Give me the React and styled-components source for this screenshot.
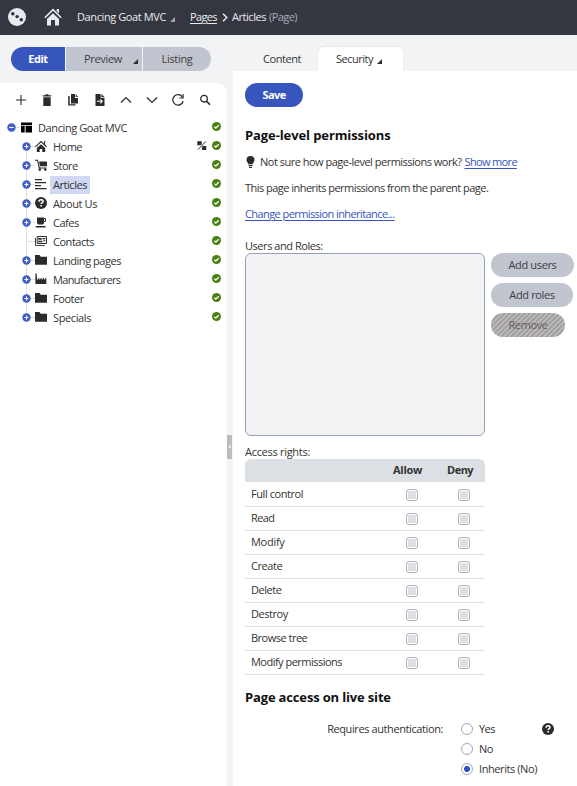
import React from 'react';
import styled, { createGlobalStyle, css } from 'styled-components';

const Global = createGlobalStyle`
  * { box-sizing: border-box; }
  body {
    margin: 0;
    background: #f2f3f5;
    font: 11px/16px "Open Sans", "Noto Sans", sans-serif;
    color: #343332;
    overflow: hidden;
  }
  svg { display: block; flex: none; }
`;

const T = styled.span`
  white-space: nowrap;
  letter-spacing: ${(p) => p.$ls ?? -0.45}px;
`;
const Page = styled.div`
  width: 577px;
  height: 786px;
  display: flex;
  flex-direction: column;
`;
const Header = styled.header`
  flex: none;
  height: 35px;
  background: #343740;
  color: #e9eaee;
  display: flex;
  align-items: center;
  padding: 0 0 1px 8px;
`;
const House = styled.svg`margin: 0 15px 0 18px;`;
const Caret = styled.svg`
  margin: ${(p) => p.$m || '0'};
  fill: ${(p) => p.$c || '#2f2f2f'};
`;
const Crumb = styled.a`
  text-decoration: underline;
  text-underline-offset: 2px;
`;
const Chevron = styled.svg`margin: 0 4px 0 5px;`;
const Kind = styled.span`
  margin-left: 3px;
  color: #a9adbb;
`;
const Main = styled.div`
  flex: 1;
  min-height: 0;
  display: flex;
`;
const Side = styled.aside`
  width: 227px;
  padding-top: 12px;
  display: flex;
  flex-direction: column;
`;
const Modes = styled.div`
  display: flex;
  gap: 1px;
  margin: 0 0 12px 11px;
  width: 200px;
  height: 24px;
  border-radius: 12px;
  overflow: hidden;
  flex: none;
`;
const Mode = styled.div`
  width: ${(p) => p.$w}px;
  display: flex;
  align-items: center;
  justify-content: ${(p) => (p.$start ? 'flex-start' : 'center')};
  padding-left: ${(p) => (p.$start ? 18 : 0)}px;
  background: #c1c5cf;
  color: #403e3d;
  ${(p) => p.$active && css`background: #3655bd; color: #fff; font-weight: 700;`}
`;
const TreePanel = styled.div`
  flex: 1;
  background: #fff;
  border-top-right-radius: 9px;
  padding-top: 9px;
`;
const Tools = styled.div`
  display: grid;
  grid-template-columns: repeat(8, 26.3px);
  place-items: center;
  margin-left: 7.5px;
  height: 16px;
`;
const Tree = styled.div`margin-top: 10px;`;
const Node = styled.div`
  height: 19px;
  display: flex;
  align-items: center;
  padding-left: ${(p) => (p.$root ? 7 : 22)}px;
`;
const Rail = styled.svg`
  margin-right: ${(p) => (p.$root ? 0 : -1)}px;
`;
const Glyph = styled.svg`margin-top: -2px;`;
const Label = styled.div`
  height: 18px;
  line-height: 17px;
  margin-left: 3px;
  padding: 0 3px;
  background: ${(p) => (p.$selected ? '#d0d8f4' : 'transparent')};
`;
const Status = styled.div`
  margin: -3px 6px 0 auto;
  display: flex;
  gap: 5px;
`;
const Splitter = styled.div`
  width: 6px;
  display: flex;
  align-items: flex-start;
  padding-top: 400px;
`;
const Grip = styled.div`
  width: 5px;
  height: 24px;
  background: #bdbbbb;
  display: grid;
  place-items: center;
`;
const Content = styled.section`
  flex: 1;
  padding-top: 12px;
  display: flex;
  flex-direction: column;
`;
const Tabs = styled.div`
  display: flex;
  height: 24px;
  flex: none;
`;
const Tab = styled.div`
  display: flex;
  align-items: center;
  width: 85px;
  padding-left: ${(p) => (p.$active ? 18 : 30)}px;
  background: ${(p) => (p.$active ? '#fff' : 'transparent')};
  border-radius: 6px 6px 0 0;
  box-shadow: ${(p) => (p.$active ? '0 -1px 2px rgba(0,0,0,.05)' : 'none')};
`;
const Body = styled.div`
  flex: 1;
  background: #fff;
  padding: 12px 0 0 12px;
`;
const Button = styled.button`
  display: block;
  width: ${(p) => p.$w}px;
  height: 24px;
  padding: 0;
  border: 0;
  border-radius: 12px;
  font: inherit;
  color: #403e3d;
  background: #c1c5cf;
  ${(p) => p.$primary && css`background: #3655bd; color: #fff; font-weight: 700;`}
  ${(p) => p.$off && css`
    color: #64605f;
    background: repeating-linear-gradient(135deg, #bdbbbb 0 1.8px, #a3a1a1 1.8px 3.54px);
  `}
`;
const Heading = styled.h4`
  margin: ${(p) => p.$m};
  font: 700 13px/20px "Open Sans", sans-serif;
  letter-spacing: ${(p) => p.$ls}px;
  color: #111;
`;
const Line = styled.div`
  display: flex;
  align-items: center;
  height: 16px;
  margin-bottom: ${(p) => p.$mb ?? 10}px;
`;
const Link = styled.a`
  color: #3655bd;
  text-decoration: underline;
  text-underline-offset: 2px;
`;
const Gap = styled.span`width: ${(p) => p.$w}px;`;
const Lists = styled.div`
  display: flex;
  gap: 6px;
  margin-bottom: 8px;
`;
const Box = styled.div`
  width: 240px;
  height: 183px;
  border: 1px solid #979fb4;
  border-radius: 6px;
  background: #f2f3f5;
`;
const Stack = styled.div`
  display: flex;
  flex-direction: column;
  gap: 6px;
`;
const Row = styled.div`
  display: grid;
  grid-template-columns: 142px 54px 38px;
  width: 240px;
  height: 24px;
  padding: 0 0 1px 6px;
  align-items: center;
  border-bottom: 1px solid #dfe0e3;
`;
const HeadRow = styled(Row)`
  height: 23px;
  margin-bottom: 1px;
  border: 0;
  border-radius: 6px 6px 0 0;
  background: #dcdfe4;
  font-weight: 700;
`;
const Check = styled.span`
  width: 12px;
  height: 12px;
  margin: 1px 0 0 ${(p) => (p.$last ? 11 : 13)}px;
  border: 1px solid #b5b3b3;
  border-radius: 3px;
  background: #dcdfe6;
  box-shadow: inset 0 0 0 1px #fff;
`;
const Auth = styled.div`
  display: grid;
  grid-template-columns: 198px 99px 12px;
  align-items: start;
`;
const AuthLabel = styled.div`
  height: 20px;
  line-height: 20px;
  text-align: right;
`;
const Options = styled.div`padding-left: 18px;`;
const Option = styled.div`
  height: 20px;
  display: flex;
  align-items: center;
  gap: 6px;
  white-space: nowrap;
`;
const Radio = styled.span`
  flex: none;
  width: 12px;
  height: 12px;
  border: 1px solid #a3a9bb;
  border-radius: 50%;
  background: ${(p) => (p.$on ? 'radial-gradient(circle, #2f51c4 0 2.7px, #fff 3.3px)' : '#fff')};
`;
const HelpSpot = styled.div`
  height: 20px;
  display: flex;
  align-items: center;
`;

const Triangle = (p) => (
  <Caret width="5" height="5" $m={p.m} $c={p.c}><path d="M5 0v5H0z" /></Caret>
);
const Help = ({ size = 12 }) => (
  <svg width={size} height={size} viewBox="0 0 12 12">
    <circle cx="6" cy="6" r="6" fill="#2c2b2a" />
    <path d="M4.1 4.7C4.1 3.4 5 2.7 6.1 2.7S8 3.4 8 4.4C8 5.7 6.2 5.7 6.2 7" fill="none" stroke="#fff" strokeWidth="1.5" />
    <path d="M5.4 8h1.6v1.5H5.4z" fill="#fff" />
  </svg>
);

const glyphs = {
  template: <><path d="M0 1h12v3H0zM0 5h4v7H0zM5 5h7v7H5z" /></>,
  home: <><path d="M6 4.2 10.2 8v4H7.3V9H4.7v3H1.8V8z" /><path d="M.4 6.8 6 1.6 11.600 6.800M9.600 1v3.500" fill="none" stroke="currentColor" strokeWidth="1.100" /></>,
  cart: <><path d="M4 2.500H12V7.300H5z" /><path d="M0 1.300h2.500L4.300 9H11.500" fill="none" stroke="currentColor" strokeWidth="1.100" /><circle cx="4.800" cy="10.600" r="1.300" /><circle cx="10.300" cy="10.600" r="1.300" /></>,
  lines: <path d="M0 1h7v1.2H0zM0 4h11v1.2H0zM0 7h6v1.2H0zM0 10h11.5v1.2H0z" />,
  help: <g><circle cx="6" cy="6" r="6" /><path d="M4 4.7C4 3.4 5 2.7 6.1 2.7S8.1 3.4 8.1 4.4C8.1 5.7 6.2 5.7 6.2 7" fill="none" stroke="#fff" strokeWidth="1.5" /><path d="M5.4 8h1.6v1.5H5.4z" fill="#fff" /></g>,
  cup: <><path d="M2 1.5h7v5.8l-1 1.2H3.2L2 7.3zM0.8 10h9.7v1.5H.8z" /><path d="M9 2.6h1.5v2.8H9" fill="none" stroke="currentColor" /></>,
  card: <><path d="M2.2 1.5h9.300v7H2.2z" fill="none" stroke="currentColor" /><path d="M.500 3v7.500h9.200" fill="none" stroke="currentColor" strokeWidth=".9" /><path d="M3.200 3h3.500v1.800H3.200zM3.200 5.700h4.200v1.500H3.200zM7.500 3h2.800v1.200H7.500zM8.200 5.300h2.200v1H8.200z" /></>,
  folder: <path d="M0 1h4.4l1.4 1.8H12v7.9H0z" />,
  factory: <path d="M.4.5h1.200l.5 6.500 2.200-2.400v2.400l2.400-2.400v2.400L9 4.600v2.400l2.300-2.400v6.500H.4z" />,
};

const nodes = [
  ['Home', 'home', -0.52], ['Store', 'cart', -0.5], ['Articles', 'lines', -0.45],
  ['About Us', 'help', -0.38], ['Cafes', 'cup', -0.5], ['Contacts', 'card', -0.47],
  ['Landing pages', 'folder', -0.45], ['Manufacturers', 'factory', -0.63],
  ['Footer', 'folder', -0.45], ['Specials', 'folder', -0.39],
];

const Ok = () => (
  <svg width="9" height="9" viewBox="0 0 9 9">
    <circle cx="4.5" cy="4.5" r="4.5" fill="#498111" />
    <path d="m2.3 4.6 1.5 1.5 2.9-2.9" fill="none" stroke="#fff" strokeWidth="1.3" />
  </svg>
);
const Unlinked = () => (
  <svg width="10" height="9" viewBox="0 0 10 9" fill="#2c2b2a">
    <path d="M.3.2h4.400v4H.3zM5 5h4.300v4H5z" />
    <path d="M8.600.6 1.200 8.400" stroke="#fff" strokeWidth="2" /><path d="M8.800.4 1 8.600" stroke="#2c2b2a" strokeWidth="1" />
  </svg>
);
function Toggle({ root, leaf, first, last }) {
  return (
    <Rail width="14" height="19" $root={root}>
      {!root && <path d={`M4.5 ${first ? 5 : 0}V${last ? 9 : 19}`} stroke="#e0e0e0" />}
      <path d="M5 9.5h8" stroke="#e0e0e0" />
      {!leaf && <circle cx="4.5" cy="9.5" r="4.2" fill="#3f5dc6" />}
      {!leaf && <path d={root ? 'M2.3 9.5h4.4' : 'M2.5 9.5h4M4.5 7.5v4'} stroke="#fff" strokeWidth="1.1" />}
    </Rail>
  );
}

const toolIcons = [
  <path d="M6 1v10M1 6h10" stroke="#2c2b2a" strokeWidth="1.1" />,
  <path d="M1.7 1.2h2.8V.2h3v1h2.8v1.3H1.7zM2.3 3.3h7.4V12H2.3z" />,
  <><path d="M4 0h4v4h3v5.5H4zM8.7 0 11 3H8.7z" /><path d="M2.7 2H1.2v9.6h7.3v-1.4H2.7z" /></>,
  <><path d="M1.5 0h5.2v3.8h3.8V12h-9zM7.5 0l3 3h-3z" /><path d="M3 7.3h5M6.3 5.3l2 2-2 2" fill="none" stroke="#fff" strokeWidth="1.1" /></>,
  <path d="m1 8.5 5-5 5 5" fill="none" stroke="#2c2b2a" strokeWidth="1.2" />,
  <path d="m1 3.5 5 5 5-5" fill="none" stroke="#2c2b2a" strokeWidth="1.2" />,
  <><path d="M10.5 3.2A5.2 5.2 0 1 0 11.1 7" fill="none" stroke="#2c2b2a" strokeWidth="1.2" /><path d="M11.7 0v4.6H7.3V3.5h3.2V0z" /></>,
  <><circle cx="5" cy="4.7" r="3.3" fill="none" stroke="#2c2b2a" strokeWidth="1.3" /><path d="m7.3 7 3.6 3.6" stroke="#2c2b2a" strokeWidth="1.7" /></>,
];

const rights = [
  ['Full control', -0.44], ['Read', -0.58], ['Modify', -0.28], ['Create', -0.45],
  ['Delete', -0.45], ['Destroy', -0.45], ['Browse tree', -0.5], ['Modify permissions', -0.52],
];

export default function App() {
  return (
    <Page>
      <Global />
      <Header>
        <svg width="18" height="18" viewBox="0 0 18 18">
          <circle cx="9" cy="9" r="9" fill="#e9eaee" />
          <g fill="#2b2e36"><circle cx="4.8" cy="5.7" r="1.7" /><circle cx="9.1" cy="8.6" r="1.7" /><circle cx="13.3" cy="11.7" r="1.7" /></g>
        </svg>
        <House width="18" height="18" viewBox="0 0 18 18">
          <path d="M9 5.3 15 11v6.500h-4V12H7v5.500H3V11zM12.700 1H15v4.500L12.700 3.300z" fill="#e9eaee" />
          <path d="m.8 9.700 8.200-8 8.200 8" fill="none" stroke="#e9eaee" strokeWidth="1.600" />
        </House>
        <T $ls={-0.4}>Dancing Goat MVC</T>
        <Triangle m="5px 15px 0 4px" c="#a4a7b0" />
        <Crumb><T $ls={-0.62}>Pages</T></Crumb>
        <Chevron width="6" height="9" viewBox="0 0 6 9"><path d="m1 .8 3.8 3.7L1 8.2" fill="none" stroke="#e9eaee" strokeWidth="1.5" /></Chevron>
        <T>Articles</T>
        <Kind><T $ls={-0.55}>(Page)</T></Kind>
      </Header>
      <Main>
        <Side>
          <Modes>
            <Mode $w={54} $active><T $ls={-0.5}>Edit</T></Mode>
            <Mode $w={76} $start><T $ls={-0.33}>Preview</T><Triangle m="5px 0 0 11px" /></Mode>
            <Mode $w={68}><T $ls={-0.31}>Listing</T></Mode>
          </Modes>
          <TreePanel>
            <Tools>
              {toolIcons.map((icon, i) => <svg key={i} width="12" height="12" viewBox="0 0 12 12" fill="#2c2b2a">{icon}</svg>)}
            </Tools>
            <Tree>
              <Node $root>
                <Toggle root />
                <Glyph width="11" height="12" viewBox="0 0 12 12">{glyphs.template}</Glyph>
                <Label><T $ls={-0.4}>Dancing Goat MVC</T></Label>
                <Status><Ok /></Status>
              </Node>
              {nodes.map(([name, glyph, ls], i) => (
                <Node key={name}>
                  <Toggle leaf={name === 'Contacts'} first={i === 0} last={i === nodes.length - 1} />
                  <Glyph width="12" height="12" viewBox="0 0 12 12" fill="#2c2b2a" color="#2c2b2a">{glyphs[glyph]}</Glyph>
                  <Label $selected={name === 'Articles'}><T $ls={ls}>{name}</T></Label>
                  <Status>{name === 'Home' && <Unlinked />}<Ok /></Status>
                </Node>
              ))}
            </Tree>
          </TreePanel>
        </Side>
        <Splitter>
          <Grip><svg width="3" height="4"><path d="M2.5 0v4L.5 2z" fill="#fff" /></svg></Grip>
        </Splitter>
        <Content>
          <Tabs>
            <Tab><T $ls={-0.43}>Content</T></Tab>
            <Tab $active><T $ls={-0.49}>Security</T><Triangle m="4px 0 0 4px" /></Tab>
          </Tabs>
          <Body>
            <Button $w={58} $primary><T $ls={-0.6}>Save</T></Button>
            <Heading $m="18px 0 9px" $ls={-0.1}>Page-level permissions</Heading>
            <Line>
              <svg width="11" height="12" viewBox="0 0 11 12" fill="#2c2b2a"><path d="M5.5 0a4 4 0 0 1 4 4c0 1.8-1.5 2.6-1.8 4.2H3.4C3 6.6 1.5 5.8 1.5 4a4 4 0 0 1 4-4zM3.5 9h4v1h-4zM4 10.7h3v1.2H4z" /></svg>
              <Gap $w={4} />
              <T $ls={-0.5}>Not sure how page-level permissions work?</T>
              <Gap $w={3} />
              <Link><T $ls={-0.64}>Show more</T></Link>
            </Line>
            <Line><T $ls={-0.53}>This page inherits permissions from the parent page.</T></Line>
            <Line $mb={16}><Link><T $ls={-0.58}>Change permission inheritance...</T></Link></Line>
            <Line $mb={-1}><T>Users and Roles:</T></Line>
            <Lists>
              <Box />
              <Stack>
                <Button $w={83}><T $ls={-0.35}>Add users</T></Button>
                <Button $w={82}><T $ls={-0.35}>Add roles</T></Button>
                <Button $w={74} $off><T $ls={-0.4}>Remove</T></Button>
              </Stack>
            </Lists>
            <Line $mb={-1}><T $ls={-0.29}>Access rights:</T></Line>
            <HeadRow><span /><T $ls={-0.25}>Allow</T><T $ls={-0.5}>Deny</T></HeadRow>
            {rights.map(([name, ls]) => (
              <Row key={name}><T $ls={ls}>{name}</T><Check /><Check $last /></Row>
            ))}
            <Heading $m="12px 0 12px" $ls={-0.16}>Page access on live site</Heading>
            <Auth>
              <AuthLabel><T $ls={-0.4}>Requires authentication:</T></AuthLabel>
              <Options>
                <Option><Radio /><T $ls={-0.6}>Yes</T></Option>
                <Option><Radio /><T>No</T></Option>
                <Option><Radio $on /><T $ls={-0.42}>Inherits (No)</T></Option>
              </Options>
              <HelpSpot><Help /></HelpSpot>
            </Auth>
          </Body>
        </Content>
      </Main>
    </Page>
  );
}
